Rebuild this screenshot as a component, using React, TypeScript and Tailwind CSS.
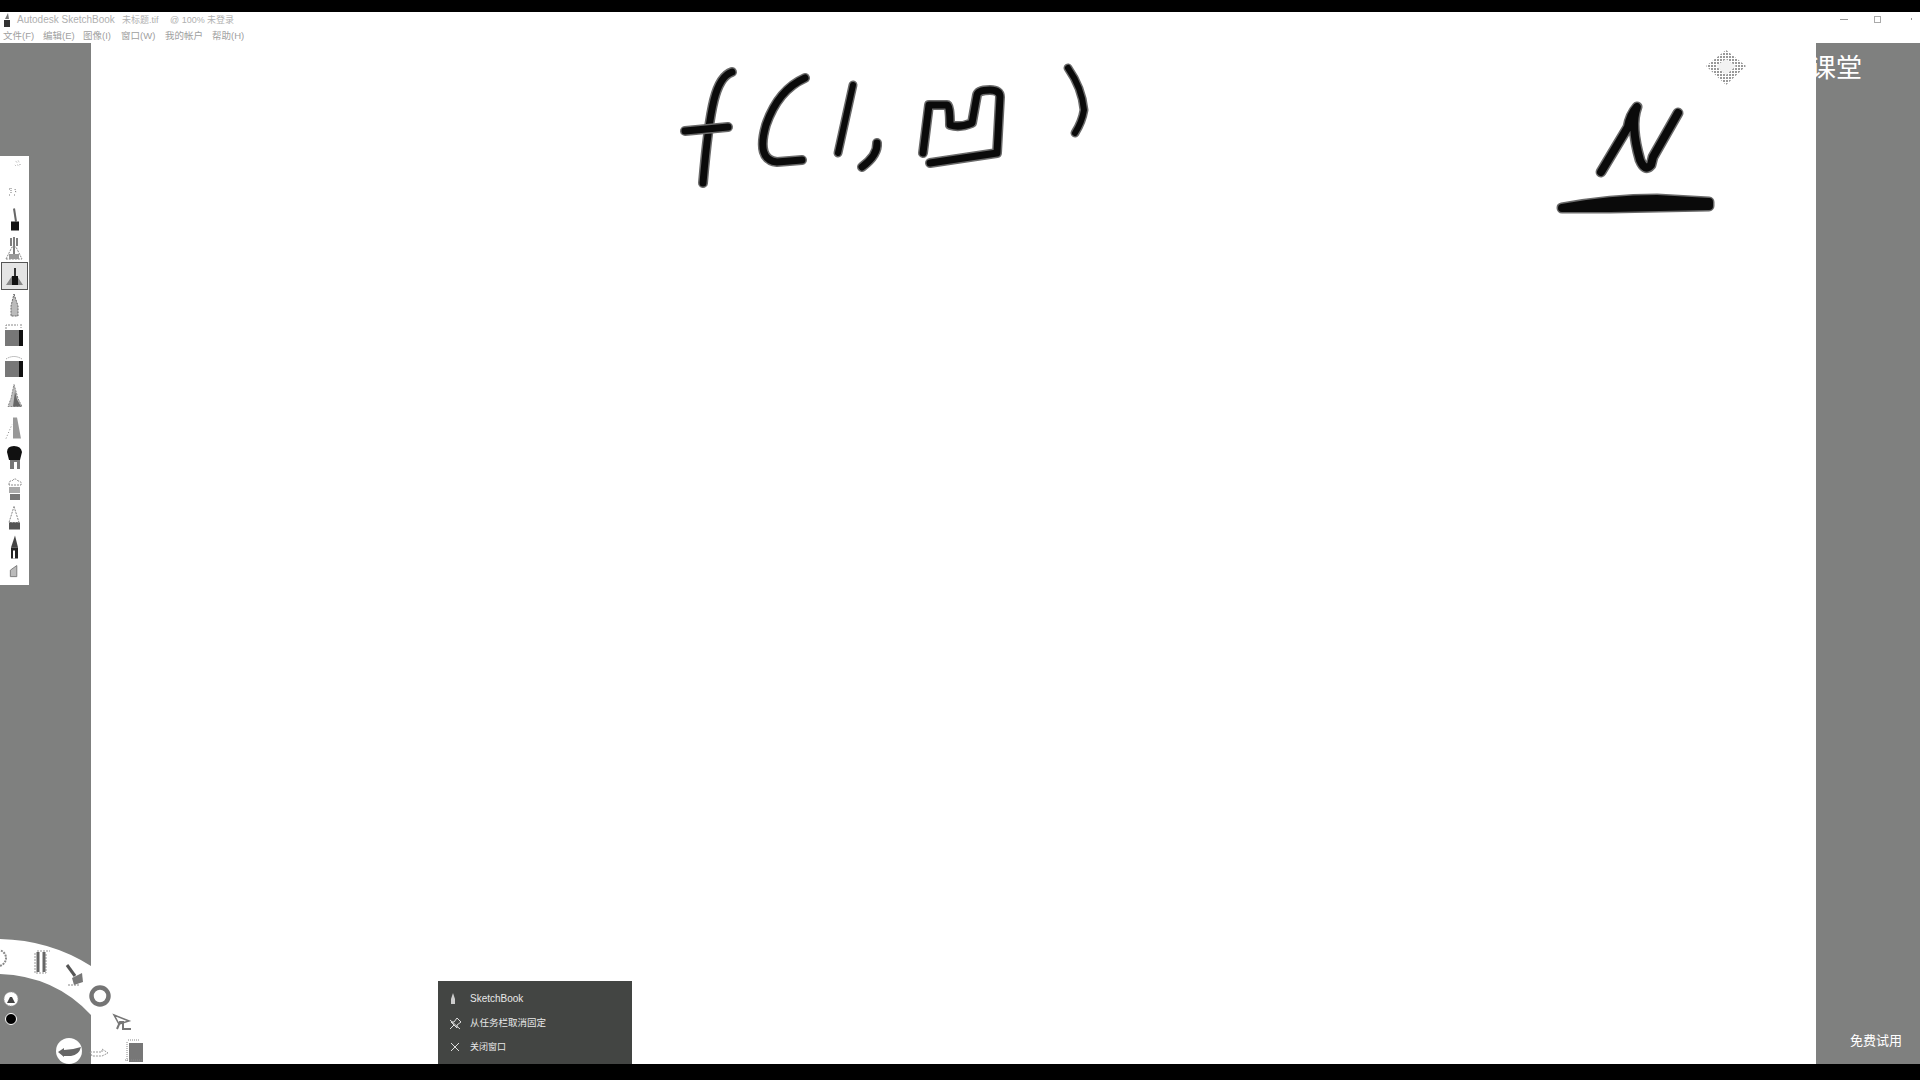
const font = { fontFamily: '"Liberation Sans", "Noto Sans CJK SC", sans-serif' };

const menuItems = [
  { label: '文件(F)', className: 'w-[40px]' },
  { label: '编辑(E)', className: 'w-[40px]' },
  { label: '图像(I)', className: 'w-[38px]' },
  { label: '窗口(W)', className: 'w-[44px]' },
  { label: '我的帐户', className: 'w-[47px]' },
  { label: '帮助(H)', className: 'w-[40px]' },
];

// each entry is one brush in the left palette
const brushes: { h: string; body: React.ReactNode; selected?: boolean }[] = [
  {
    h: 'h-[22px]',
    body: <path d="M16 3l2 1M19 2l1 2M15 7l1 1M18 7l2 1M21 6v1" stroke="#777" strokeWidth="1" strokeDasharray="1 1" fill="none" />,
  },
  {
    h: 'h-[26px]',
    body: <path d="M11 7v5M9 8h1M15 8l1 4M9 14h1M14 14h2" stroke="#777" strokeWidth="1" strokeDasharray="1 1" fill="none" />,
  },
  {
    h: 'h-[27px]',
    body: (
      <>
        <path d="M14 1l2 13" stroke="#666" strokeWidth="2" fill="none" />
        <rect x="11" y="14" width="8" height="9" fill="#111" />
      </>
    ),
  },
  {
    h: 'h-[28px]',
    body: (
      <>
        <path d="M14 2v18M11 3v8M17 3v8" stroke="#555" strokeWidth="1.5" fill="none" />
        <path d="M6 24l6-12h4l6 12z" fill="none" stroke="#888" strokeDasharray="2 1" />
        <rect x="9" y="19" width="10" height="5" fill="#999" />
      </>
    ),
  },
  {
    h: 'h-[28px]',
    selected: true,
    body: (
      <>
        <path d="M15 5v16" stroke="#333" strokeWidth="2" />
        <path d="M6 22l6-9h5l6 9z" fill="#888" />
        <rect x="12" y="13" width="6" height="9" fill="#111" />
      </>
    ),
  },
  {
    h: 'h-[30px]',
    body: <path d="M14 2l4 12v10h-7V14z" fill="#bbb" stroke="#666" strokeDasharray="2 1" />,
  },
  {
    h: 'h-[30px]',
    body: (
      <>
        <path d="M6 7V3h12M21 2v4" stroke="#888" strokeDasharray="2 1" fill="none" />
        <rect x="5" y="8" width="18" height="16" fill="#777" />
        <rect x="19" y="8" width="4" height="16" fill="#111" />
      </>
    ),
  },
  {
    h: 'h-[32px]',
    body: (
      <>
        <path d="M6 6q8-5 16 0" stroke="#888" strokeDasharray="1 1" fill="none" />
        <rect x="5" y="8" width="18" height="16" fill="#777" />
        <rect x="19" y="8" width="4" height="16" fill="#111" />
      </>
    ),
  },
  {
    h: 'h-[29px]',
    body: (
      <>
        <path d="M14 1l4 14 4 8H8l3-8z" fill="#bbb" stroke="#888" strokeDasharray="2 1" />
        <path d="M15 8l2 8 4 7h-8z" fill="#666" />
      </>
    ),
  },
  {
    h: 'h-[31px]',
    body: (
      <>
        <path d="M6 25l6-14" stroke="#888" strokeDasharray="1 2" fill="none" />
        <path d="M13 4h4l4 21h-8z" fill="#999" />
      </>
    ),
  },
  {
    h: 'h-[30px]',
    body: (
      <>
        <path d="M7 8q0-6 7-6t8 6l-2 8H9z" fill="#111" />
        <rect x="10" y="16" width="10" height="9" fill="#777" />
        <rect x="14" y="18" width="3" height="7" fill="#fff" />
      </>
    ),
  },
  {
    h: 'h-[30px]',
    body: (
      <>
        <path d="M9 11q0-5 3-4 3-4 6 0 4 0 3 4z" fill="none" stroke="#888" strokeDasharray="2 1" />
        <rect x="9" y="13" width="11" height="6" fill="#aaa" />
        <rect x="10" y="20" width="10" height="6" fill="#777" />
      </>
    ),
  },
  {
    h: 'h-[31px]',
    body: (
      <>
        <path d="M14 2l5 16H9z" fill="none" stroke="#888" strokeDasharray="2 1" />
        <rect x="9" y="18" width="11" height="7" fill="#555" />
      </>
    ),
  },
  {
    h: 'h-[27px]',
    body: (
      <>
        <path d="M15 2l3 12h-7z" fill="#444" />
        <rect x="11" y="14" width="7" height="11" fill="#222" />
        <rect x="13" y="17" width="2" height="8" fill="#fff" />
      </>
    ),
  },
  {
    h: 'h-[24px]',
    body: <path d="M10 18v-7l7-5v12z" fill="#bbb" stroke="#777" />,
  },
];

function Stroke({ d, width = 9 }: { d: string; width?: number }) {
  return (
    <>
      <path d={d} fill="none" stroke="#6a6a6a" strokeWidth={width + 1} strokeLinecap="round" strokeLinejoin="round" />
      <path d={d} fill="none" stroke="#0a0a0a" strokeWidth={width - 2} strokeLinecap="round" strokeLinejoin="round" />
    </>
  );
}

function Handwriting() {
  return (
    <svg className="absolute left-0 top-0 pointer-events-none" width="1920" height="1080" viewBox="0 0 1920 1080">
      <Stroke d="M732 72Q720 76 714 100T703 183" />
      <Stroke d="M685 131L728 127" />
      <Stroke d="M805 78Q778 90 766 125Q756 160 777 162L802 160" />
      <Stroke d="M853 85L838 153" width={8} />
      <Stroke d="M877 143Q878 155 862 167" width={9} />
      <Stroke d="M923 153L929 105H947Q950 105 950 125Q960 128 972 123L977 95Q978 90 990 90Q1000 90 1000 97L997 153L930 163" width={9} />
      <Stroke d="M1068 68Q1082 88 1084 110Q1082 122 1075 133" width={8} />
      <Stroke d="M1601 172L1628 127Q1630 115 1637 107Q1630 125 1640 160Q1645 172 1651 165L1653 157L1678 113" width={10} />
      <Stroke d="M1562 208Q1610 199 1657 199L1709 202V206L1610 208Z" width={10} />
    </svg>
  );
}

function RadialMenu() {
  return (
    <svg className="absolute left-0 bottom-[16px]" width="170" height="134" viewBox="0 0 170 134">
      <path d="M0 9Q50 10 91 36V85Q55 46 0 44Z" fill="#fff" />
      <path d="M-2 20a8 8 0 0 1 0 16" fill="none" stroke="#888" strokeWidth="2" strokeDasharray="2 1" />
      {/* tools */}
      <path d="M35 23v20h11V23M37 21h13" fill="none" stroke="#999" strokeDasharray="2 1" />
      <path d="M38 22v20M44 22v20" stroke="#666" strokeWidth="3" />
      {/* paint brush */}
      <path d="M67 35l8 11" stroke="#555" strokeWidth="3" />
      <path d="M72 48l10-5 1 9-9 3z" fill="#777" />
      <path d="M68 55h12" stroke="#888" strokeDasharray="2 1" />
      {/* colour ring */}
      <circle cx="100" cy="66" r="8.5" fill="none" stroke="#757575" strokeWidth="4.5" />
      {/* pen and cursor */}
      <path d="M114 85l15 6-10 3z" fill="none" stroke="#777" strokeWidth="1.5" />
      <path d="M117 99l3-7h3v7h8" fill="none" stroke="#777" strokeWidth="2" />
      {/* undo and redo */}
      <circle cx="69" cy="121" r="13" fill="#fff" />
      <path d="M58 122l6-4v2q8 0 17-3-2 8-10 9h-7v1z" fill="#666" />
      <path d="M90 122h12v-3l6 4-6 3h-10z" fill="none" stroke="#999" strokeDasharray="2 1" />
      {/* layers */}
      <rect x="129" y="113" width="14" height="19" fill="#777" />
      <path d="M127 112v19M128 110h12M125 130h18" stroke="#888" strokeDasharray="1 1" fill="none" />
      {/* current brush and colour */}
      <circle cx="11" cy="69" r="7" fill="#fff" stroke="#aaa" strokeDasharray="1 1" />
      <path d="M7 73l3-6h2l3 6z" fill="#444" />
      <circle cx="11" cy="89" r="5.5" fill="#000" stroke="#fff" strokeWidth="1" />
    </svg>
  );
}

export default function App() {
  return (
    <div className="relative flex h-screen w-[1920px] flex-col overflow-hidden bg-white" style={font}>
      <div className="h-[12px] bg-black" />

      {/* title bar */}
      <div className="flex h-[16px] items-center pl-[3px] text-[9px] leading-none text-[#b0b0b0]">
        <svg width="9" height="14" viewBox="0 0 9 14">
          <path d="M5 0l1 6H2z" fill="#777" />
          <rect x="1" y="7" width="6" height="7" fill="#333" />
        </svg>
        <span className="ml-[5px] w-[100px] whitespace-nowrap text-[10px]">Autodesk SketchBook</span>
        <span className="ml-[5px] w-[48px] whitespace-nowrap">未标题.tif</span>
        <span className="w-[37px] whitespace-nowrap">@ 100%</span>
        <span className="whitespace-nowrap">未登录</span>
        <div className="ml-auto mb-[2px] flex items-center">
          <span className="h-px w-[8px] bg-[#999]" />
          <span className="ml-[26px] h-[7px] w-[7px] border border-[#aaa]" />
          <span className="ml-[30px] mr-[8px] h-[2px] w-px bg-[#999]" />
        </div>
      </div>

      {/* menu bar */}
      <div className="flex h-[15px] items-center pl-[3px] text-[9.5px] leading-none text-[#a0a0a0]">
        {menuItems.map((item) => (
          <span key={item.label} className={`whitespace-nowrap ${item.className}`}>
            {item.label}
          </span>
        ))}
      </div>

      <div className="flex min-h-0 flex-1">
        {/* left rail with brush palette */}
        <div className="w-[91px] bg-[#7f807f] pt-[113px]">
          <div className="flex h-[429px] w-[29px] flex-col bg-white pt-[3px]">
            {brushes.map((brush, i) => (
              <div key={i} className={`relative w-[29px] shrink-0 ${brush.h}`}>
                {brush.selected && (
                  <div className="absolute inset-x-[1px] inset-y-0 border border-[#555] bg-[#e4e4e4]" />
                )}
                <svg className="relative" width="29" height="100%" viewBox="0 0 29 26">
                  {brush.body}
                </svg>
              </div>
            ))}
          </div>
        </div>

        <div className="flex-1 bg-white" />

        {/* right rail */}
        <div className="flex w-[104px] flex-col justify-end bg-[#7f807f] pb-[17px] pl-[34px] text-[13px] leading-none text-white">
          <span className="whitespace-nowrap">免费试用</span>
        </div>
      </div>

      <div className="h-[16px] bg-black" />

      <Handwriting />
      <RadialMenu />

      {/* watermark */}
      <div className="absolute left-[1705px] top-[50px] flex items-center gap-[11px]">
        <svg width="42" height="36" viewBox="0 0 42 36">
          <defs>
            <pattern id="dither" width="3" height="3" patternUnits="userSpaceOnUse">
              <rect width="2" height="2" fill="#999" />
            </pattern>
          </defs>
          <path d="M21 0L41 16 21 35 1 16Z" fill="url(#dither)" />
          <path d="M21 9L31 16 21 25 11 16Z" fill="#f2f2f2" />
        </svg>
        <span className="whitespace-nowrap text-[26px] leading-none text-white">深度课堂</span>
      </div>

      {/* taskbar jump list */}
      <div className="absolute bottom-[16px] left-[438px] flex h-[83px] w-[194px] flex-col gap-[8px] bg-[#434543] pl-[11px] pt-[10px] text-[10px] leading-none text-[#e8e8e8]">
        <div className="flex h-[16px] items-center gap-[13px]">
          <svg width="8" height="12" viewBox="0 0 8 12">
            <path d="M4 0l2 6v5H2V6z" fill="#ccc" />
          </svg>
          <span>SketchBook</span>
        </div>
        <div className="flex h-[16px] items-center gap-[8px]">
          <svg width="13" height="13" viewBox="0 0 13 13" fill="none" stroke="#ddd">
            <path d="M1 12l4-4M5 5l3-4 4 4-4 3v3L2 5zM1 3l10 9" />
          </svg>
          <span className="whitespace-nowrap text-[9.5px]">从任务栏取消固定</span>
        </div>
        <div className="flex h-[16px] items-center gap-[9px]">
          <svg width="12" height="12" viewBox="0 0 12 12" stroke="#ddd">
            <path d="M2 2l8 8M10 2l-8 8" />
          </svg>
          <span className="whitespace-nowrap text-[9px]">关闭窗口</span>
        </div>
      </div>
    </div>
  );
}
